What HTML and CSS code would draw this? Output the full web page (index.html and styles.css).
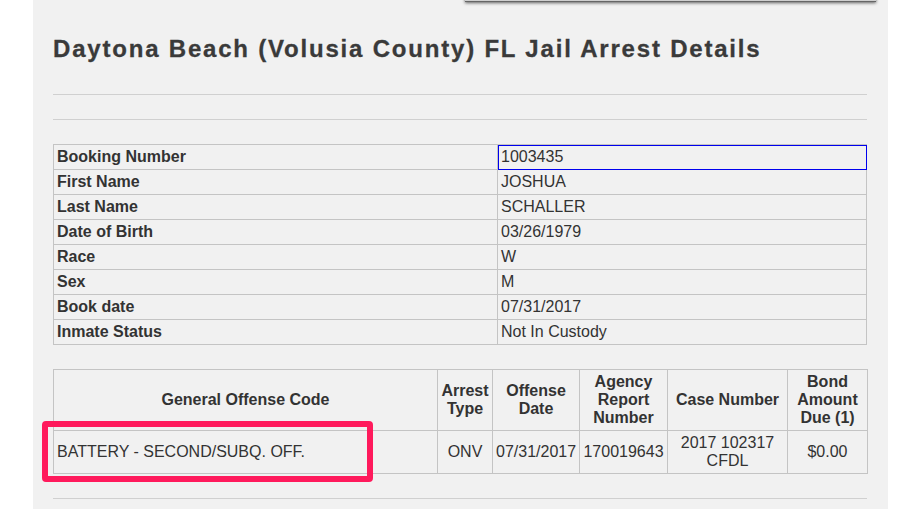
FILE: index.html
```html
<!DOCTYPE html>
<html>
<head>
<meta charset="utf-8">
<link rel="stylesheet" href="styles.css">
</head>
<body>
<div class="panel">
  <div class="menu-edge"></div>
  <h1 class="title">Daytona Beach (Volusia County) FL Jail Arrest Details</h1>
  <hr class="rule rule-first">
  <hr class="rule rule-second">
  <table class="details">
    <tr><th>Booking Number</th><td class="focused">1003435</td></tr>
    <tr><th>First Name</th><td>JOSHUA</td></tr>
    <tr><th>Last Name</th><td>SCHALLER</td></tr>
    <tr><th>Date of Birth</th><td>03/26/1979</td></tr>
    <tr><th>Race</th><td>W</td></tr>
    <tr><th>Sex</th><td>M</td></tr>
    <tr><th>Book date</th><td>07/31/2017</td></tr>
    <tr><th>Inmate Status</th><td>Not In Custody</td></tr>
  </table>
  <table class="charges">
    <colgroup>
      <col class="c-code"><col class="c-type"><col class="c-date"><col class="c-agency"><col class="c-case"><col class="c-bond">
    </colgroup>
    <tr>
      <th>General Offense Code</th>
      <th>Arrest Type</th>
      <th>Offense Date</th>
      <th>Agency Report Number</th>
      <th>Case Number</th>
      <th>Bond Amount Due (1)</th>
    </tr>
    <tr>
      <td class="left">BATTERY - SECOND/SUBQ. OFF.</td>
      <td>ONV</td>
      <td>07/31/2017</td>
      <td>170019643</td>
      <td>2017 102317 CFDL</td>
      <td>$0.00</td>
    </tr>
  </table>
  <hr class="rule rule-bottom">
  <div class="highlight"></div>
</div>
</body>
</html>
```
FILE: styles.css
```css
html, body {
  margin: 0;
  padding: 0;
  background: #ffffff;
}
body {
  font-family: "Liberation Sans", Arial, sans-serif;
  color: #333333;
  height: 509px;
  overflow: hidden;
}
.panel {
  position: relative;
  margin-left: 33px;
  width: 855px;
  min-height: 509px;
  box-sizing: border-box;
  padding: 0 21px 0 20px;
  background: #f1f1f1;
}
.menu-edge {
  position: absolute;
  left: 432px;
  top: -12px;
  width: 411px;
  height: 13px;
  background: #cfcfcf;
  border-bottom: 1px solid #666;
  box-shadow: 0 1px 3px rgba(0, 0, 0, 0.6);
}
.title {
  margin: 0;
  padding-top: 35px;
  font-size: 24px;
  line-height: 28px;
  font-weight: bold;
  letter-spacing: 1.8px;
  color: #3a3a3a;
  white-space: nowrap;
  -webkit-text-stroke: 0.3px #3a3a3a;
}
.rule {
  border: 0;
  border-top: 1px solid #d0d0d0;
  margin: 0;
  height: 0;
}
.rule-first { margin-top: 31px; }
.rule-second { margin-top: 24px; }
.rule-bottom { margin-top: 24px; }
table {
  border-collapse: collapse;
  width: 814px;
  font-size: 16px;
  line-height: 18px;
  color: #333333;
}
th, td {
  border: 1px solid #c4c4c4;
  padding: 3px 3px;
}
.details {
  margin-top: 24px;
}
.details th {
  text-align: left;
  font-weight: bold;
  width: 437px;
}
.details td {
  text-align: left;
}
.details td.focused {
  outline: 1px solid #0000ee;
  outline-offset: -1px;
}
.charges {
  margin-top: 24px;
  table-layout: fixed;
}
.charges th {
  font-weight: bold;
  text-align: center;
  vertical-align: middle;
}
.charges td {
  text-align: center;
  vertical-align: middle;
}
.charges td.left {
  text-align: left;
}
.c-code { width: 384px; }
.c-type { width: 55px; }
.c-date { width: 87px; }
.c-agency { width: 88px; }
.c-case { width: 120px; }
.c-bond { width: 80px; }
.highlight {
  position: absolute;
  left: 9px;
  top: 421px;
  width: 331px;
  height: 61px;
  box-sizing: border-box;
  border: 6px solid #ff1a5c;
  border-radius: 4px;
}
```
